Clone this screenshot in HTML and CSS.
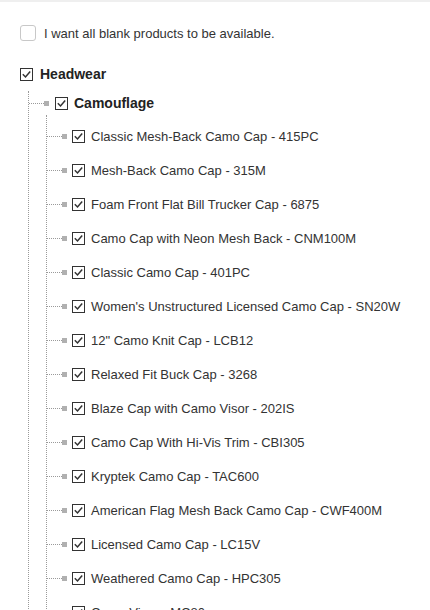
FILE: index.html
```html
<!DOCTYPE html>
<html>
<head>
<meta charset="utf-8">
<link rel="stylesheet" href="styles.css">
</head>
<body>
<div class="page">
  <label class="blank">
    <span class="blank-box"></span>
    <span class="blank-text">I want all blank products to be available.</span>
  </label>

  <div class="node-row root-row">
    <span class="cb"><svg viewBox="0 0 13 13" width="13" height="13"><path d="M2.8 6.3 L5.5 9 L10.2 3.4" fill="none" stroke="#333" stroke-width="1.5"/></svg></span>
    <span class="label bold">Headwear</span>
  </div>

  <div class="children level1">
    <div class="node-row cat-row">
      <span class="conn"></span><span class="sq"></span>
      <span class="cb"><svg viewBox="0 0 13 13" width="13" height="13"><path d="M2.8 6.3 L5.5 9 L10.2 3.4" fill="none" stroke="#333" stroke-width="1.5"/></svg></span>
      <span class="label bold">Camouflage</span>
    </div>

    <div class="children level2">
      <div class="node-row item"><span class="conn"></span><span class="sq"></span><span class="cb"><svg viewBox="0 0 13 13" width="13" height="13"><path d="M2.8 6.3 L5.5 9 L10.2 3.4" fill="none" stroke="#333" stroke-width="1.5"/></svg></span><span class="label">Classic Mesh-Back Camo Cap - 415PC</span></div>
      <div class="node-row item"><span class="conn"></span><span class="sq"></span><span class="cb"><svg viewBox="0 0 13 13" width="13" height="13"><path d="M2.8 6.3 L5.5 9 L10.2 3.4" fill="none" stroke="#333" stroke-width="1.5"/></svg></span><span class="label">Mesh-Back Camo Cap - 315M</span></div>
      <div class="node-row item"><span class="conn"></span><span class="sq"></span><span class="cb"><svg viewBox="0 0 13 13" width="13" height="13"><path d="M2.8 6.3 L5.5 9 L10.2 3.4" fill="none" stroke="#333" stroke-width="1.5"/></svg></span><span class="label">Foam Front Flat Bill Trucker Cap - 6875</span></div>
      <div class="node-row item"><span class="conn"></span><span class="sq"></span><span class="cb"><svg viewBox="0 0 13 13" width="13" height="13"><path d="M2.8 6.3 L5.5 9 L10.2 3.4" fill="none" stroke="#333" stroke-width="1.5"/></svg></span><span class="label">Camo Cap with Neon Mesh Back - CNM100M</span></div>
      <div class="node-row item"><span class="conn"></span><span class="sq"></span><span class="cb"><svg viewBox="0 0 13 13" width="13" height="13"><path d="M2.8 6.3 L5.5 9 L10.2 3.4" fill="none" stroke="#333" stroke-width="1.5"/></svg></span><span class="label">Classic Camo Cap - 401PC</span></div>
      <div class="node-row item"><span class="conn"></span><span class="sq"></span><span class="cb"><svg viewBox="0 0 13 13" width="13" height="13"><path d="M2.8 6.3 L5.5 9 L10.2 3.4" fill="none" stroke="#333" stroke-width="1.5"/></svg></span><span class="label">Women's Unstructured Licensed Camo Cap - SN20W</span></div>
      <div class="node-row item"><span class="conn"></span><span class="sq"></span><span class="cb"><svg viewBox="0 0 13 13" width="13" height="13"><path d="M2.8 6.3 L5.5 9 L10.2 3.4" fill="none" stroke="#333" stroke-width="1.5"/></svg></span><span class="label">12" Camo Knit Cap - LCB12</span></div>
      <div class="node-row item"><span class="conn"></span><span class="sq"></span><span class="cb"><svg viewBox="0 0 13 13" width="13" height="13"><path d="M2.8 6.3 L5.5 9 L10.2 3.4" fill="none" stroke="#333" stroke-width="1.5"/></svg></span><span class="label">Relaxed Fit Buck Cap - 3268</span></div>
      <div class="node-row item"><span class="conn"></span><span class="sq"></span><span class="cb"><svg viewBox="0 0 13 13" width="13" height="13"><path d="M2.8 6.3 L5.5 9 L10.2 3.4" fill="none" stroke="#333" stroke-width="1.5"/></svg></span><span class="label">Blaze Cap with Camo Visor - 202IS</span></div>
      <div class="node-row item"><span class="conn"></span><span class="sq"></span><span class="cb"><svg viewBox="0 0 13 13" width="13" height="13"><path d="M2.8 6.3 L5.5 9 L10.2 3.4" fill="none" stroke="#333" stroke-width="1.5"/></svg></span><span class="label">Camo Cap With Hi-Vis Trim - CBI305</span></div>
      <div class="node-row item"><span class="conn"></span><span class="sq"></span><span class="cb"><svg viewBox="0 0 13 13" width="13" height="13"><path d="M2.8 6.3 L5.5 9 L10.2 3.4" fill="none" stroke="#333" stroke-width="1.5"/></svg></span><span class="label">Kryptek Camo Cap - TAC600</span></div>
      <div class="node-row item"><span class="conn"></span><span class="sq"></span><span class="cb"><svg viewBox="0 0 13 13" width="13" height="13"><path d="M2.8 6.3 L5.5 9 L10.2 3.4" fill="none" stroke="#333" stroke-width="1.5"/></svg></span><span class="label">American Flag Mesh Back Camo Cap - CWF400M</span></div>
      <div class="node-row item"><span class="conn"></span><span class="sq"></span><span class="cb"><svg viewBox="0 0 13 13" width="13" height="13"><path d="M2.8 6.3 L5.5 9 L10.2 3.4" fill="none" stroke="#333" stroke-width="1.5"/></svg></span><span class="label">Licensed Camo Cap - LC15V</span></div>
      <div class="node-row item"><span class="conn"></span><span class="sq"></span><span class="cb"><svg viewBox="0 0 13 13" width="13" height="13"><path d="M2.8 6.3 L5.5 9 L10.2 3.4" fill="none" stroke="#333" stroke-width="1.5"/></svg></span><span class="label">Weathered Camo Cap - HPC305</span></div>
      <div class="node-row item"><span class="conn"></span><span class="sq"></span><span class="cb"><svg viewBox="0 0 13 13" width="13" height="13"><path d="M2.8 6.3 L5.5 9 L10.2 3.4" fill="none" stroke="#333" stroke-width="1.5"/></svg></span><span class="label">Camo Visor - MC80</span></div>
    </div>
  </div>
</div>
</body>
</html>
```
FILE: styles.css
```css
html, body {
  margin: 0;
  padding: 0;
  background: #fff;
}
body {
  border-top: 2px solid #efefef;
  font-family: "Liberation Sans", Arial, sans-serif;
  color: #333;
  font-size: 13px;
  height: 608px;
  overflow: hidden;
}
.page {
  padding: 23px 0 0 20px;
}
.blank {
  display: flex;
  align-items: center;
  height: 16px;
}
.blank-box {
  width: 14px;
  height: 14px;
  border: 1px solid #c8c8c8;
  border-radius: 3px;
  flex: none;
}
.blank-text {
  margin-left: 8px;
  font-size: 13px;
  color: #333;
}
.node-row {
  display: flex;
  align-items: center;
}
.root-row {
  margin-top: 23px;
  height: 20px;
}
.cb {
  width: 11px;
  height: 11px;
  border: 1px solid #333;
  flex: none;
  position: relative;
  background: #fff;
}
.cb svg {
  position: absolute;
  left: -1px;
  top: -1px;
}
.label {
  margin-left: 7px;
  white-space: nowrap;
}
.bold {
  font-weight: bold;
  font-size: 14px;
  color: #222;
}
.children {
  border-left: 1px dotted #9a9a9a;
}
.level1 {
  margin-left: 8px;
}
.cat-row {
  margin-top: 7px;
  height: 24px;
}
.cat-row .label {
  margin-left: 6px;
}
.level2 {
  margin-left: 17px;
  padding-top: 4px;
}
.item {
  height: 34px;
}
.item .label {
  margin-left: 6px;
}
.conn {
  width: 15px;
  height: 0;
  border-top: 1px dotted #9a9a9a;
  flex: none;
}
.sq {
  width: 5px;
  height: 5px;
  background: #b0b0b0;
  flex: none;
  margin-right: 6px;
}
.item .sq {
  margin-right: 5px;
}
```
